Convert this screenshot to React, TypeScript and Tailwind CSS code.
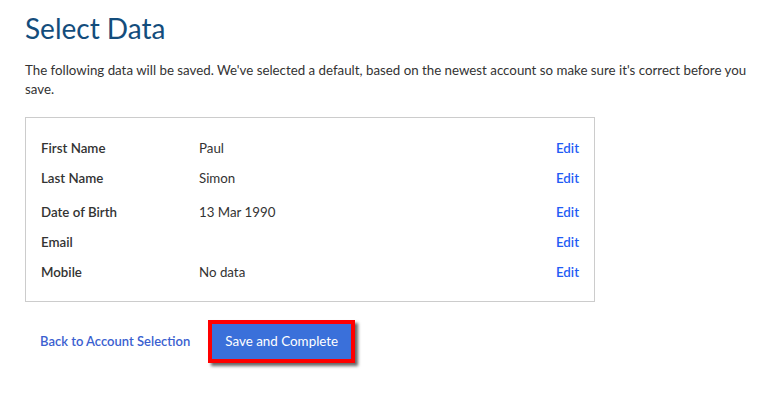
const rows = [
  { label: 'First Name', value: 'Paul', gap: false },
  { label: 'Last Name', value: 'Simon', gap: false },
  { label: 'Date of Birth', value: '13 Mar 1990', gap: true },
  { label: 'Email', value: '', gap: false },
  { label: 'Mobile', value: 'No data', gap: false },
]

export default function App() {
  return (
    <div className="min-h-[402px] bg-white pl-[25px] pt-[10px] font-['Lato','Noto_Sans',sans-serif] text-[#333]">
      <h1 className="text-[28px] leading-[36px] text-[#134d7c]">Select Data</h1>
      <p className="mt-[15px] w-[735px] text-[13.3px] leading-[19px]">
        The following data will be saved. We've selected a default, based on the newest account so make sure it's
        correct before you save.
      </p>

      <div className="mt-[18px] w-[570px] border border-[#cccccc] px-[15px] pt-[16px] pb-[13px]">
        {rows.map((r) => (
          <div key={r.label} className={`flex h-[30px] items-center text-[13.3px] ${r.gap ? 'mt-[4px]' : ''}`}>
            <span className="w-[158px] font-semibold">{r.label}</span>
            <span className="flex-1">{r.value}</span>
            <a href="#" className="font-semibold text-[#1f5cf5]">
              Edit
            </a>
          </div>
        ))}
      </div>

      <div className="mt-[18px] flex items-center">
        <a href="#" className="ml-[15px] text-[13px] font-semibold text-[#3b5fd0]">
          Back to Account Selection
        </a>
        <button className="ml-[18px] h-[43px] w-[147px] border-[4px] border-[#ff0000] bg-[#3a70da] text-[13.4px] text-white shadow-[3px_3px_3px_rgba(0,0,0,0.6)]">
          Save and Complete
        </button>
      </div>
    </div>
  )
}
